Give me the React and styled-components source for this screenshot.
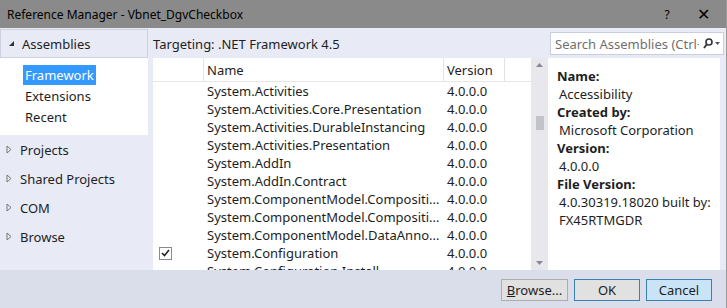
import React from 'react'
import styled, { createGlobalStyle } from 'styled-components'

const Global = createGlobalStyle`
html, body { margin: 0; padding: 0; background: #e8ebf6; }
* { box-sizing: border-box; }
`

const Window = styled.div`
width: 727px;
height: 308px;
display: flex;
flex-direction: column;
background: #e8ebf6;
font-family: "Noto Sans", "Open Sans", sans-serif;
font-size: 12px;
color: #1e1e1e;
border-right: 1px solid #9a9a9a;
overflow: hidden;
`

const TitleBar = styled.div`
height: 28px;
flex: none;
background: #8a8a8a;
display: flex;
align-items: center;
padding-left: 7px;
color: #000;
`

const Title = styled.div`
flex: 1;
`

const Caption = styled.div`
width: ${p => p.w}px;
text-align: center;
font-size: ${p => p.size || 12}px;
`

const Body = styled.div`
flex: 1;
display: flex;
min-height: 0;
`

const Left = styled.div`
width: 148px;
flex: none;
display: flex;
flex-direction: column;
padding-top: 1px;
`

const Group = styled.div`
height: 29px;
display: flex;
align-items: center;
border: 1px solid #cdd1e2;
padding-left: 7px;
font-size: 13px;
`

const Tri = styled.span`
width: 14px;
display: inline-flex;
align-items: center;
`

const SubList = styled.div`
background: #fff;
height: 77px;
padding-top: 6px;
display: flex;
flex-direction: column;
`

const SubItem = styled.div`
height: 21px;
display: flex;
align-items: center;
padding-left: 23px;
font-size: 13px;
span {
  padding: 0 2px;
  line-height: 20px;
  background: ${p => (p.active ? '#3399ff' : 'transparent')};
  color: ${p => (p.active ? '#fff' : 'inherit')};
}
`

const Node = styled.div`
height: 29px;
display: flex;
align-items: center;
padding-left: 6px;
font-size: 13px;
&:first-of-type { margin-top: 0; }
`

const Nodes = styled.div`
padding-top: 0px;
`

const Main = styled.div`
flex: 1;
display: grid;
grid-template-columns: 395px 1fr;
grid-template-rows: 30px 1fr;
margin-left: 5px;
margin-right: 6px;
`

const Targeting = styled.div`
display: flex;
align-items: center;
font-size: 13px;
padding-top: 1px;
`

const Search = styled.div`
margin: 4px -4px 3px 2px;
background: #fff;
border: 1px solid #c9cde0;
display: flex;
align-items: center;
padding-left: 4px;
color: #707070;
font-size: 13px;
white-space: nowrap;
overflow: hidden;
position: relative;
`

const SearchIcon = styled.div`
position: absolute;
right: 0;
top: 0;
bottom: 0;
width: 24px;
background: #fff;
display: flex;
align-items: center;
justify-content: center;
gap: 2px;
`

const List = styled.div`
background: #fff;
display: flex;
min-height: 0;
overflow: hidden;
`

const Grid = styled.div`
flex: 1;
`

const Header = styled.div`
height: 24px;
display: flex;
border-bottom: 1px solid #e6e6e6;
font-size: 13px;
`

const Col = styled.div`
width: ${p => p.w}px;
flex: none;
display: flex;
align-items: center;
padding-left: ${p => p.pad || 0}px;
border-right: ${p => (p.last ? 'none' : '1px solid #e3e3e3')};
white-space: nowrap;
overflow: hidden;
`

const Row = styled.div`
height: 18px;
display: flex;
font-size: 13px;
`

const Cell = styled.div`
width: ${p => p.w}px;
flex: none;
display: flex;
align-items: center;
padding-left: ${p => p.pad || 0}px;
white-space: nowrap;
overflow: hidden;
`

const Check = styled.div`
width: 13px;
height: 13px;
border: 1px solid #8a8a8a;
background: #fff;
display: flex;
align-items: center;
justify-content: center;
`

const Scroll = styled.div`
width: 17px;
flex: none;
background: #e8e8ec;
display: flex;
flex-direction: column;
align-items: center;
padding: 5px 0;
justify-content: space-between;
position: relative;
`

const Thumb = styled.div`
position: absolute;
left: 5px;
top: 58px;
width: 8px;
height: 14px;
background: #c2c3c9;
`

const Details = styled.div`
background: #fff;
padding: 9px 0 0 9px;
font-size: 13px;
line-height: 18px;
`

const Label = styled.div`
font-weight: bold;
`

const Value = styled.div`
padding-left: 2px;
`

const Footer = styled.div`
height: 38px;
flex: none;
background: #dadeea;
display: flex;
justify-content: flex-end;
align-items: center;
gap: 6px;
padding-right: 14px;
padding-top: 2px;
`

const Button = styled.div`
width: ${p => p.w || 66}px;
height: 22px;
display: flex;
align-items: center;
justify-content: center;
font-size: 13px;
background: ${p => (p.primary ? '#c9e4f6' : '#e1e1e1')};
border: 1px solid ${p => (p.blue ? '#3c7fb1' : '#adadad')};
u { text-decoration: underline; }
`

const rows = [
  'System.Activities',
  'System.Activities.Core.Presentation',
  'System.Activities.DurableInstancing',
  'System.Activities.Presentation',
  'System.AddIn',
  'System.AddIn.Contract',
  'System.ComponentModel.Compositi...',
  'System.ComponentModel.Compositi...',
  'System.ComponentModel.DataAnno...',
  'System.Configuration',
  'System.Configuration.Install',
]

const Solid = () => (
  <svg width="7" height="7" viewBox="0 0 7 7"><path d="M6 1 L6 6 L1 6 Z" fill="#333" /></svg>
)

const Open = () => (
  <svg width="6" height="9" viewBox="0 0 6 9"><path d="M1 1 L5 4.5 L1 8 Z" fill="none" stroke="#777" /></svg>
)

const App = () => {
  return (
    <>
      <Global />
      <Window>
        <TitleBar>
          <Title>Reference Manager - Vbnet_DgvCheckbox</Title>
          <Caption w={26}>?</Caption>
          <Caption w={46} size={16}>✕</Caption>
        </TitleBar>
        <Body>
          <Left>
            <Group><Tri><Solid /></Tri>Assemblies</Group>
            <SubList>
              <SubItem active><span>Framework</span></SubItem>
              <SubItem><span>Extensions</span></SubItem>
              <SubItem><span>Recent</span></SubItem>
            </SubList>
            <Nodes>
              {['Projects', 'Shared Projects', 'COM', 'Browse'].map(n => (
                <Node key={n}><Tri><Open /></Tri>{n}</Node>
              ))}
            </Nodes>
          </Left>
          <Main>
            <Targeting>Targeting: .NET Framework 4.5</Targeting>
            <Search>
              Search Assemblies (Ctrl+E)
              <SearchIcon>
                <svg width="10" height="11" viewBox="0 0 10 11">
                  <circle cx="6" cy="4" r="3" fill="none" stroke="#333" strokeWidth="1.6" />
                  <path d="M4 6 L1 10" stroke="#333" strokeWidth="1.8" />
                </svg>
                <svg width="5" height="3" viewBox="0 0 5 3"><path d="M0 0 L5 0 L2.5 3 Z" fill="#555" /></svg>
              </SearchIcon>
            </Search>
            <List>
              <Grid>
                <Header>
                  <Col w={51} />
                  <Col w={240} pad={3}>Name</Col>
                  <Col w={61} pad={3}>Version</Col>
                  <Col w={26} last />
                </Header>
                {rows.map((r, i) => (
                  <Row key={i}>
                    <Cell w={51} pad={6}>
                      {i === 9 && (
                        <Check>
                          <svg width="9" height="8" viewBox="0 0 9 8"><path d="M1 4 L3.5 6.5 L8 1" fill="none" stroke="#222" strokeWidth="1.6" /></svg>
                        </Check>
                      )}
                    </Cell>
                    <Cell w={240} pad={3}>{r}</Cell>
                    <Cell w={61} pad={3}>4.0.0.0</Cell>
                  </Row>
                ))}
              </Grid>
              <Scroll>
                <svg width="7" height="4" viewBox="0 0 7 4"><path d="M0 4 L7 4 L3.5 0 Z" fill="#868999" /></svg>
                <Thumb />
                <svg width="7" height="4" viewBox="0 0 7 4"><path d="M0 0 L7 0 L3.5 4 Z" fill="#868999" /></svg>
              </Scroll>
            </List>
            <Details>
              <Label>Name:</Label>
              <Value>Accessibility</Value>
              <Label>Created by:</Label>
              <Value>Microsoft Corporation</Value>
              <Label>Version:</Label>
              <Value>4.0.0.0</Value>
              <Label>File Version:</Label>
              <Value>4.0.30319.18020 built by:</Value>
              <Value>FX45RTMGDR</Value>
            </Details>
          </Main>
        </Body>
        <Footer>
          <Button w={67}><u>B</u>rowse...</Button>
          <Button blue>OK</Button>
          <Button blue primary>Cancel</Button>
        </Footer>
      </Window>
    </>
  )
}

export default App
